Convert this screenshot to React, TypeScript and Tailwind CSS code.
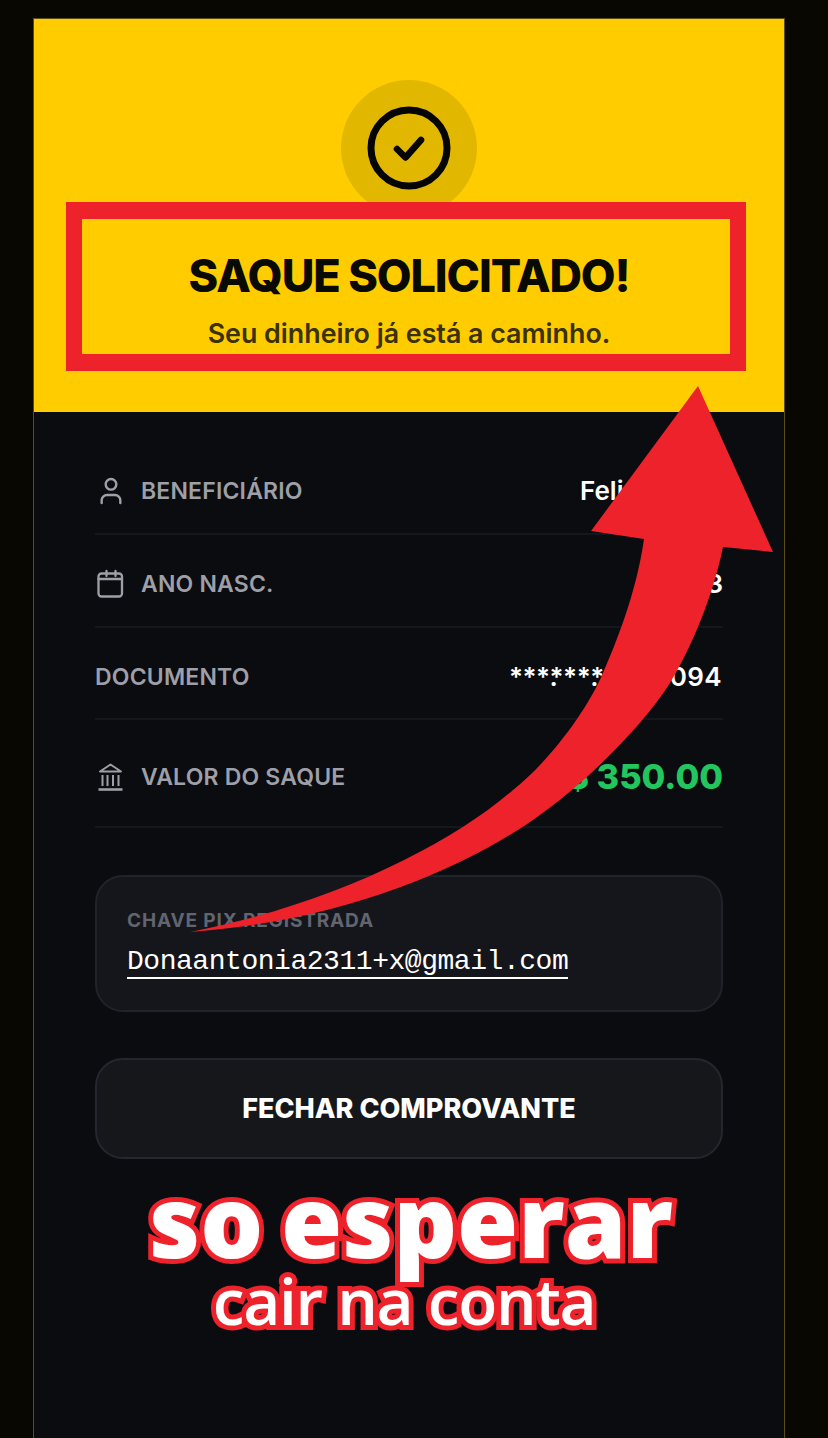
import { User } from "lucide-react";
import type { ReactNode } from "react";

type RowProps = {
  icon?: ReactNode;
  label: string;
  className: string;
  children: ReactNode;
};

function Row({ icon, label, className, children }: RowProps) {
  return (
    <div className={`flex items-center justify-between border-b-2 border-[#14171c] ${className}`}>
      <div className="flex items-center gap-[14px]">
        {icon}
        <span className="text-[23px] leading-[30px] font-semibold tracking-[0.008em] text-[#9e9fa7]">{label}</span>
      </div>
      {children}
    </div>
  );
}

function CalendarIcon() {
  return (
    <svg width="32" height="32" viewBox="0 0 32 32" fill="none" stroke="#9e9fa7" strokeWidth="2.300" strokeLinecap="round">
      <rect x="3.500" y="5.500" width="23.500" height="23" rx="3" />
      <path d="M11.500 3v5M20.500 3v5M3.500 11h23.500" />
    </svg>
  );
}

function BankIcon() {
  return (
    <svg width="32" height="32" viewBox="0 0 32 32" fill="none" stroke="#9e9fa7" strokeWidth="2">
      <path d="M5 10.500L15.500 3.500L26 10.500Z" strokeLinejoin="round" />
      <path d="M7.500 14v11M12.500 14v11M18 14v11M23.500 14v11" />
      <path d="M3.500 28.500h24" strokeWidth="2.600" />
    </svg>
  );
}

export default function App() {
  return (
    <div className="relative h-[1438px] w-[828px] overflow-hidden bg-[#080702] pt-[18px] pl-[33px] font-['Inter',sans-serif]">
      {/* comprovante */}
      <div className="flex h-[1460px] w-[752px] flex-col border border-[#5c4c12] bg-[#0a0c10]">
        <header className="flex h-[393px] flex-col items-center bg-[#ffcc00] pt-[61px]">
          <div className="flex size-[136px] items-center justify-center rounded-full bg-[#e2b700]">
            <svg width="84" height="84" viewBox="0 0 84 84" fill="none" stroke="#050505" strokeLinecap="round" strokeLinejoin="round">
              <circle cx="42" cy="42" r="38" strokeWidth="7" />
              <path d="M30 43l8.500 8.500L54 34" strokeWidth="6.500" />
            </svg>
          </div>
          <h1 className="mt-[32px] text-[45px] leading-[56px] font-extrabold tracking-[-0.025em] text-[#0a0a05]">SAQUE SOLICITADO!</h1>
          <p className="mt-[13px] text-[26.800px] leading-[32px] font-semibold text-[#3a3105]">Seu dinheiro já está a caminho.</p>
        </header>

        <div className="mx-[61px] flex flex-col">
          <Row
            className="h-[123px] pt-[37px]"
            icon={<User className="size-[32px] text-[#9e9fa7]" strokeWidth={1.800} />}
            label="BENEFICIÁRIO"
          >
            <span className="w-[143px] text-[26px] leading-[34px] font-semibold text-white">Feli</span>
          </Row>
          <Row className="h-[93px] pt-[7px]" icon={<CalendarIcon />} label="ANO NASC.">
            <span className="text-[26px] leading-[34px] font-semibold text-white">3</span>
          </Row>
          <Row className="h-[92px] pt-[8px]" label="DOCUMENTO">
            <span className="flex w-[214px] items-center justify-between pr-[1px] text-[26px] leading-[34px] font-semibold text-white">
              <span className="tracking-[-0.5px]">
                ***<span className="inline-block w-0">.</span>***<span className="inline-block w-0">.</span>***
              </span>
              <span className="tracking-[0.4px]">-094</span>
            </span>
          </Row>
          <Row className="h-[108px] pt-[8px]" icon={<BankIcon />} label="VALOR DO SAQUE">
            <span className="text-[34.400px] leading-[40px] font-extrabold text-[#22c55e]">R$ 350.00</span>
          </Row>

          <div className="mt-[47px] flex h-[137px] flex-col rounded-[28px] border-2 border-[#20232a] bg-[#14161c] px-[30px] pt-[32px]">
            <span className="text-[19px] leading-[24px] font-bold tracking-[0.045em] text-[#62656f]">CHAVE PIX REGISTRADA</span>
            <span className="mt-[13px] w-fit border-b-2 border-white font-['Liberation_Mono',monospace] text-[28px] leading-[31px] tracking-[-0.46px] text-white">
              Donaantonia2311+x@gmail.com
            </span>
          </div>

          <button className="mt-[46px] h-[101px] rounded-[28px] border-2 border-[#24272d] bg-[#15171b] pt-[1px] text-[27px] font-extrabold text-white">
            FECHAR COMPROVANTE
          </button>
        </div>
      </div>

      {/* anotações por cima do print */}
      <div className="absolute top-[202px] left-[66px] h-[169px] w-[680px] border-x-[16px] border-y-[17px] border-[#ee222b]" />

      <svg className="absolute top-0 left-0" width="828" height="1438" viewBox="0 0 828 1438" fill="#ee222b">
        <path d="M698 386L773 552L723 547C712 600 690 650 670 683C640 730 575 795 513 833C440 878 330 922 190 932C330 905 450 845 513 790C545 765 585 715 603 673C615 645 636 595 644 539L591 531Z" />
      </svg>

      <div className="absolute top-[1165px] left-0 w-full text-center font-['Open_Sans',sans-serif] text-white">
        <p className="pr-[6px] text-[99px] leading-[110px] font-extrabold [word-spacing:-8px] [-webkit-text-stroke:10px_#ee222b] [paint-order:stroke_fill]">so esperar</p>
        <p className="-mt-[10px] pr-[20px] text-[64px] leading-[72px] font-semibold tracking-[-0.02em] [-webkit-text-stroke:10px_#ee222b] [paint-order:stroke_fill]">cair na conta</p>
      </div>
    </div>
  );
}
